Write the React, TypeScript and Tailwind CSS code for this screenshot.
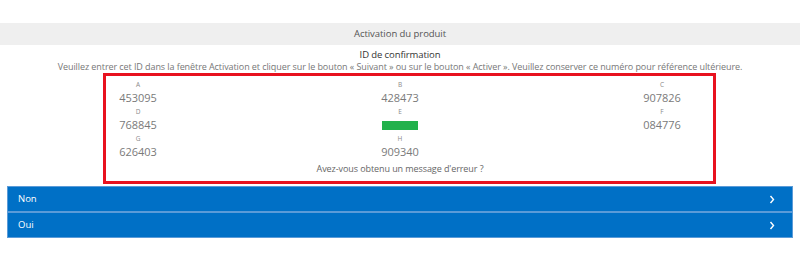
const cells = [
  { label: "A", value: "453095" },
  { label: "B", value: "428473" },
  { label: "C", value: "907826" },
  { label: "D", value: "768845" },
  { label: "E", value: null },
  { label: "F", value: "084776" },
  { label: "G", value: "626403" },
  { label: "H", value: "909340" },
];

function Chevron() {
  return (
    <svg width="6" height="9" viewBox="0 0 6 9" className="block">
      <path d="M1.5 1 L4.5 4.5 L1.5 8" fill="none" stroke="#ffffff" strokeWidth="1.4" />
    </svg>
  );
}

export default function App() {
  return (
    <div className="w-[800px] h-[257px] bg-white pt-[23px] font-['Open_Sans',sans-serif] overflow-hidden">
      {/* title bar */}
      <div className="h-[22px] bg-[#efefef] flex items-center justify-center text-[9.5px] tracking-[-0.05px] text-[#555]">
        Activation du produit
      </div>

      <div className="mt-[4px] text-center text-[9.5px] leading-[12px] tracking-[-0.1px] text-[#333]">ID de confirmation</div>
      <div className="text-center text-[9px] leading-[12px] tracking-[-0.08px] text-[#777] whitespace-nowrap">
        Veuillez entrer cet ID dans la fenêtre Activation et cliquer sur le bouton « Suivant » ou sur le bouton « Activer ». Veuillez conserver ce numéro pour référence ultérieure.
      </div>

      {/* confirmation box */}
      <div className="ml-[103px] w-[613px] h-[111px] border-[3px] border-[#e8121f] pt-[4px]">
        <div className="w-[588px]">
          <div className="grid grid-cols-[64px_64px_64px] gap-x-[198px]">
            {cells.map((c) => (
              <div key={c.label} className="flex flex-col items-center">
                <div className="h-[10px] leading-[10px] text-[6.5px] text-[#8a8a8a]">{c.label}</div>
                <div className="h-[17px] flex items-center text-[11px] text-[#7a7a7a]">
                  {c.value ?? <div className="w-[36px] h-[9px] bg-[#22b14c]" />}
                </div>
              </div>
            ))}
          </div>
          <div className="h-[16px] leading-[16px] text-center text-[9px] tracking-[-0.08px] text-[#666]">
            Avez-vous obtenu un message d'erreur ?
          </div>
        </div>
      </div>

      {/* answers */}
      <div className="mx-[7px] mt-[2px]">
        {["Non", "Oui"].map((t) => (
          <div
            key={t}
            className="h-[26px] bg-[#0070c6] border border-[#5b9bd8] flex items-center justify-between pl-[10px] pr-[17px] text-[9.5px] text-white"
          >
            <span>{t}</span>
            <Chevron />
          </div>
        ))}
      </div>
    </div>
  );
}
